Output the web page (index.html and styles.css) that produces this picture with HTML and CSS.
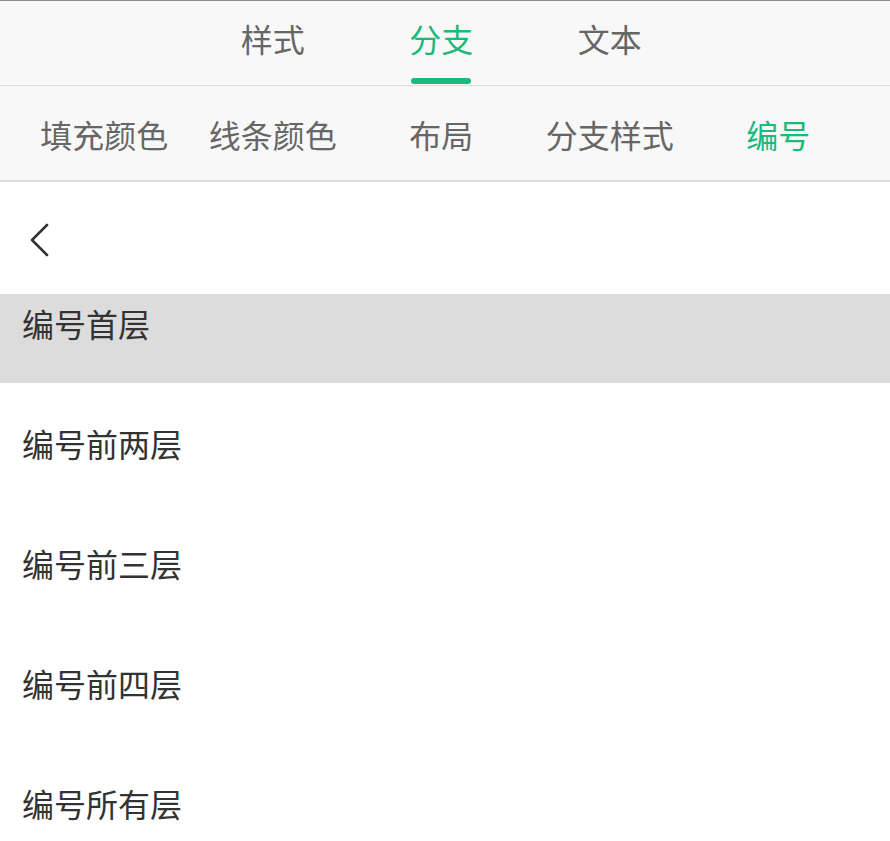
FILE: index.html
```html
<!DOCTYPE html>
<html lang="zh-CN">
<head>
    <meta charset="UTF-8">
    <meta name="viewport" content="width=device-width, initial-scale=1.0">
    <title>编号</title>
    <link rel="stylesheet" href="styles.css">
</head>
<body>
<div class="panel">
    <div class="tabs">
        <div class="tab"><span class="tab-label">样式</span></div>
        <div class="tab active"><span class="tab-label">分支</span><span class="tab-bar"></span></div>
        <div class="tab"><span class="tab-label">文本</span></div>
    </div>

    <div class="subtabs">
        <div class="subtab">填充颜色</div>
        <div class="subtab">线条颜色</div>
        <div class="subtab">布局</div>
        <div class="subtab">分支样式</div>
        <div class="subtab active">编号</div>
    </div>

    <div class="back-row">
        <svg class="back" width="24" height="36" viewBox="0 0 24 36">
            <polyline points="19,3 4,18 19,33" fill="none" stroke="#333" stroke-width="2.6" stroke-linecap="round" stroke-linejoin="round"/>
        </svg>
    </div>

    <ul class="options">
        <li class="option selected">编号首层</li>
        <li class="option">编号前两层</li>
        <li class="option">编号前三层</li>
        <li class="option">编号前四层</li>
        <li class="option">编号所有层</li>
    </ul>
</div>
</body>
</html>
```

FILE: styles.css
```css
body {
    margin: 0;
    background: #fff;
    font-family: "Noto Sans CJK SC", "Noto Sans", sans-serif;
    overflow: hidden;
}

.tabs {
    display: grid;
    grid-template-columns: repeat(5, 168.5px);
    padding-left: 20px;
    height: 84px;
    background: #f8f8f8;
    border-top: 1px solid #8c8c8c;
    border-bottom: 1px solid #dcdcdc;
}

.tab {
    display: flex;
    flex-direction: column;
    align-items: center;
    padding-top: 13px;
    color: #666;
    font-size: 32px;
}

.tab:first-child {
    grid-column: 2;
}

.tab-label {
    line-height: 48px;
}

.tab.active {
    color: #1bb97c;
}

.tab-bar {
    width: 60px;
    height: 6px;
    margin-top: 16px;
    border-radius: 3px;
    background: #1bb97c;
}

.subtabs {
    display: grid;
    grid-template-columns: repeat(5, 168.5px);
    align-items: center;
    padding: 2px 0 0 20px;
    box-sizing: border-box;
    height: 96px;
    background: #f8f8f8;
    border-bottom: 2px solid #dcdcdc;
}

.subtab {
    text-align: center;
    font-size: 32px;
    line-height: 48px;
    color: #666;
}

.subtab.active {
    color: #1bb97c;
}

.back-row {
    height: 112px;
    padding-left: 28px;
    box-sizing: border-box;
    padding-top: 40px;
}

.back {
    display: block;
}

.options {
    list-style: none;
    margin: 0;
    padding: 0;
}

.option {
    height: 89px;
    margin-bottom: 31px;
    padding: 5px 0 0 22px;
    box-sizing: border-box;
    font-size: 32px;
    line-height: 48px;
    color: #333;
}

.option.selected {
    background: #dcdcdc;
}
```
